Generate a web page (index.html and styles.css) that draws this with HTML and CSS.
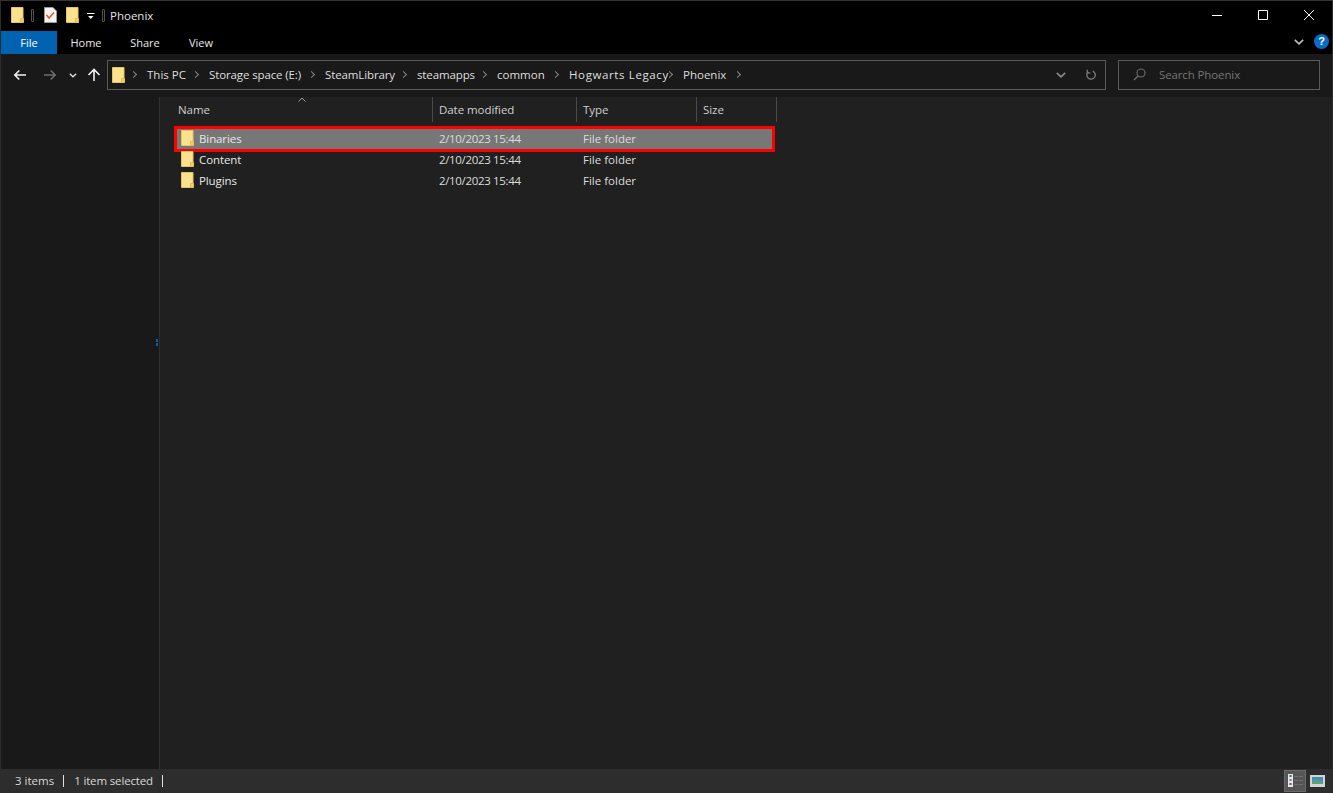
FILE: index.html
```html
<!DOCTYPE html>
<html lang="en">
<head>
<meta charset="utf-8">
<title>Phoenix</title>
<link rel="stylesheet" href="styles.css">
</head>
<body>
<svg class="defs" width="0" height="0" aria-hidden="true">
  <symbol id="folder" viewBox="0 0 13 16">
    <path d="M.5.5h11.500v15H.5z" fill="#fbe28f" stroke="#e9c35c"/>
    <path d="M9.500 15.500v-4h3v4z" fill="#f2cd6c" stroke="#e5bd55"/>
  </symbol>
</svg>
<div class="window">
  <header class="titlebar">
    <svg class="folder qa-first"><use href="#folder"/></svg>
    <span class="qa-sep"></span>
    <svg class="qa-check" viewBox="0 0 13 16"><path d="M.5.5h8.500l3.500 3.500v11.500h-12z" fill="#f4f4f4" stroke="#9a9a9a"/><path d="M2.500 8l2.500 3 5-5.500" fill="none" stroke="#e2562b" stroke-width="1.500"/></svg>
    <svg class="folder qa-second"><use href="#folder"/></svg>
    <svg class="qa-drop" viewBox="0 0 8 7"><path d="M0 .5h7.500" stroke="#fff"/><path d="M1 3h5.500l-2.750 3z" fill="#fff"/></svg>
    <span class="qa-sep qa-sep-last"></span>
    <span class="title-text">Phoenix</span>
    <div class="win-buttons">
      <svg class="win-btn" viewBox="0 0 46 31"><path d="M18 15.500h10" stroke="#fff"/></svg>
      <svg class="win-btn" viewBox="0 0 46 31"><path d="M18.500 10.500h9v9h-9z" fill="none" stroke="#fff"/></svg>
      <svg class="win-btn" viewBox="0 0 46 31"><path d="M18 10l10 10m0-10l-10 10" stroke="#fff" fill="none"/></svg>
    </div>
  </header>
  <nav class="ribbon">
    <span class="tab tab-file">File</span>
    <span class="tab tab-home">Home</span>
    <span class="tab tab-share">Share</span>
    <span class="tab tab-view">View</span>
    <svg class="ribbon-chev" viewBox="0 0 10 6"><path d="M.8.8L5 4.800 9.200.8" fill="none" stroke="#bdbdbd" stroke-width="1.600"/></svg>
    <span class="help">?</span>
  </nav>
  <div class="navrow">
    <svg class="nav-ico nav-back" viewBox="0 0 14 14"><path d="M13 7H1.800M6.300 2.500L1.800 7l4.500 4.500" fill="none" stroke="#f2f2f2" stroke-width="1.600"/></svg>
    <svg class="nav-ico nav-fwd" viewBox="0 0 14 14"><path d="M1 7h11.200M7.700 2.500L12.200 7l-4.500 4.500" fill="none" stroke="#6d6d6d" stroke-width="1.600"/></svg>
    <svg class="nav-down" viewBox="0 0 8 5"><path d="M.8.8L4 3.800 7.200.8" fill="none" stroke="#dcdcdc" stroke-width="1.400"/></svg>
    <svg class="nav-ico nav-up" viewBox="0 0 14 14"><path d="M7 13V1.800M1.500 7L7 1.500 12.500 7" fill="none" stroke="#f2f2f2" stroke-width="1.600"/></svg>
    <div class="address">
      <svg class="folder addr-folder"><use href="#folder"/></svg>
      <div class="crumbs">
        <span class="crumb">This PC</span>
        <span class="crumb crumb-tight">Storage space (E:)</span>
        <span class="crumb crumb-tight">SteamLibrary</span>
        <span class="crumb crumb-tight">steamapps</span>
        <span class="crumb">common</span>
        <span class="crumb crumb-wide">Hogwarts Legacy</span>
        <span class="crumb">Phoenix</span>
      </div>
      <span class="addr-actions">
        <svg class="addr-chev" viewBox="0 0 10 6"><path d="M.8.8L5 4.800 9.200.8" fill="none" stroke="#8a8a8a" stroke-width="1.600"/></svg>
        <svg class="addr-refresh" viewBox="0 0 12 12"><path d="M3.500 2.600A4.600 4.600 0 1 0 8.500 1.800" fill="none" stroke="#7c7c7c" stroke-width="1.400"/><path d="M2.500 .3v3.300h3.300" fill="none" stroke="#7c7c7c" stroke-width="1.400"/></svg>
      </span>
    </div>
    <div class="search">
      <svg class="search-ico" viewBox="0 0 13 13"><circle cx="8" cy="5" r="4" fill="none" stroke="#6e6e6e" stroke-width="1.100"/><path d="M5 8l-4 4" stroke="#6e6e6e" stroke-width="1.200"/></svg>
      <span>Search Phoenix</span>
    </div>
  </div>
  <main class="body">
    <aside class="sidebar"></aside>
    <section class="content">
      <div class="sort-mark"><svg viewBox="0 0 8 5" width="8" height="5"><path d="M.5 4.500L4 1l3.500 3.500" fill="none" stroke="#9d9d9d"/></svg></div>
      <div class="grid head">
        <span class="col col-name">Name</span>
        <span class="col">Date modified</span>
        <span class="col">Type</span>
        <span class="col">Size</span>
      </div>
      <div class="rows">
        <div class="grid row selected">
          <span class="col-name cell"><svg class="folder"><use href="#folder"/></svg>Binaries</span>
          <span class="cell cell-date">2/10/2023 15:44</span>
          <span class="cell">File folder</span>
          <span></span>
        </div>
        <div class="grid row">
          <span class="col-name cell"><svg class="folder"><use href="#folder"/></svg>Content</span>
          <span class="cell cell-date">2/10/2023 15:44</span>
          <span class="cell">File folder</span>
          <span></span>
        </div>
        <div class="grid row">
          <span class="col-name cell"><svg class="folder"><use href="#folder"/></svg>Plugins</span>
          <span class="cell cell-date">2/10/2023 15:44</span>
          <span class="cell">File folder</span>
          <span></span>
        </div>
      </div>
    </section>
  </main>
  <footer class="status">
    <span class="stat stat-items">3 items</span>
    <span class="stat stat-sel">1 item selected</span>
    <span class="view-btn view-on">
      <svg viewBox="0 0 20 20" width="20" height="20">
        <rect x="3" y="3" width="5" height="13" fill="#e8e8e8"/>
        <rect x="4.500" y="4" width="2" height="2" fill="#555"/><rect x="4.500" y="8" width="2" height="2" fill="#4a86c0"/><rect x="4.500" y="12" width="2" height="2" fill="#a33"/>
        <path d="M9 5.500h4m1 0h4M9 9.500h4m1 0h4M9 13.500h4m1 0h4" stroke="#707070"/>
      </svg>
    </span>
    <span class="view-btn">
      <svg viewBox="0 0 15 12" width="15" height="12">
        <rect width="15" height="12" fill="#d4d4d4"/>
        <rect x="2" y="2" width="11" height="7" fill="#3f8fc4"/>
        <path d="M2 6l4-2 7 3v2H2z" fill="#5f9e7a"/>
      </svg>
    </span>
  </footer>
</div>
</body>
</html>
```

FILE: styles.css
```css
* { box-sizing: border-box; }
html, body { margin: 0; height: 100%; background: #000; overflow: hidden; }
body { font-family: "Open Sans", "Noto Sans", sans-serif; font-size: 12px; color: #e6e6e6; }
.defs { position: absolute; }
.window { height: 793px; display: flex; flex-direction: column; border-left: 1px solid #2c2c2c; border-right: 1px solid #2c2c2c; }
.folder { width: 13px; height: 16px; flex: none; }

.titlebar { height: 31px; flex: none; background: #000; display: flex; align-items: center; border-top: 1px solid #333; padding: 0 0 2px 10px; }
.qa-sep { width: 3px; height: 13px; border: 1px solid #555; border-radius: 1px; margin-left: 7px; }
.qa-check { width: 13px; height: 16px; margin-left: 10px; }
.qa-second { margin-left: 9px; }
.qa-drop { width: 8px; height: 7px; margin: 3px 0 0 8px; }
.qa-sep-last { margin-left: 7px; }
.title-text { margin-left: 5px; color: #e4e4e4; font-size: 11.500px; }
.win-buttons { margin-left: auto; display: flex; }
.win-btn { width: 46px; height: 31px; }

.ribbon { height: 23px; flex: none; background: #000; display: flex; align-items: stretch; padding-right: 3px; }
.tab { display: flex; align-items: center; justify-content: center; font-size: 11px; color: #e8e8e8; }
.tab-file { width: 56px; background: #0063b1; color: #fff; }
.tab-home { width: 58px; }
.tab-share { width: 60px; }
.tab-view { width: 52px; }
.ribbon-chev { width: 10px; height: 6px; margin: 8px 0 0 auto; }
.help { width: 15px; height: 15px; margin: 3px 0 0 10px; border-radius: 50%; background: #0a6cc7; color: #fff; font: bold 11px/15px "Liberation Sans", sans-serif; text-align: center; }

.navrow { height: 43px; flex: none; background: #191919; display: flex; align-items: center; padding: 0 12px 1px 12px; }
.nav-ico { width: 14px; height: 14px; flex: none; }
.nav-fwd { margin-left: 16px; }
.nav-down { width: 8px; height: 5px; margin-left: 12px; }
.nav-up { margin-left: 10px; }
.address { width: 999px; height: 30px; margin-left: 6px; border: 1px solid #5b5b5b; display: flex; align-items: center; padding: 0 0 1px 4px; color: #dedede; }
.crumbs { display: grid; grid-template-columns: 62px 116px 92px 80px 72px 114px 70px; margin-left: 6px; font-size: 11.500px; }
.crumb { white-space: nowrap; display: flex; align-items: center; gap: 9px; }
.crumb-tight { letter-spacing: -.12px; }
.crumb-wide { letter-spacing: .62px; }
.crumb::before { content: ""; width: 4px; height: 4px; border-top: 1.500px solid #868686; border-right: 1.500px solid #868686; transform: rotate(45deg); margin-right: 2px; flex: none; }
.crumb:last-child::after { content: ""; width: 4px; height: 4px; border-top: 1.500px solid #868686; border-right: 1.500px solid #868686; transform: rotate(45deg); margin-left: 0; flex: none; }
.addr-actions { margin-left: auto; display: flex; align-items: center; height: 100%; }
.addr-chev { width: 10px; height: 6px; margin-right: 19px; }
.addr-refresh { width: 11px; height: 12px; margin-right: 9px; }
.search { width: 202px; height: 30px; margin-left: 12px; border: 1px solid #5b5b5b; display: flex; align-items: center; padding: 0 0 1px 14px; gap: 13px; color: #767676; font-size: 11.500px; letter-spacing: -.12px; }
.search-ico { width: 13px; height: 13px; }

.body { flex: 1; display: flex; min-height: 0; }
.sidebar { width: 159px; flex: none; background: #191919; border-right: 1px solid #2f2f2f; position: relative; }
.sidebar::after { content: ""; position: absolute; left: 155px; top: 242px; width: 2px; height: 7px; background: linear-gradient(#0a5fb0 0 3px, #191919 3px 4px, #0a5fb0 4px); }
.content { flex: 1; background: #202020; position: relative; }
.sort-mark { position: absolute; left: 138px; top: 0; line-height: 0; }
.grid { display: grid; grid-template-columns: 273px 144px 120px 80px; }
.head { height: 25px; color: #cfcfcf; font-size: 11.500px; letter-spacing: -.06px; }
.col { border-right: 1px solid #4a4a4a; padding-left: 6px; display: flex; align-items: center; }
.col-name { padding-left: 18px; }
.rows { margin-top: 7px; padding-left: 15px; display: flex; flex-direction: column; }
.row { height: 21px; grid-template-columns: 258px 144px 120px 78px; width: 600px; color: #dcdcdc; font-size: 11.500px; align-items: center; position: relative; }
.row .cell { padding: 0 0 2px 6px; display: flex; align-items: center; white-space: nowrap; }
.row .col-name { padding-left: 6px; gap: 5px; color: #e8e8e8; letter-spacing: -.1px; }
.row .cell-date { letter-spacing: -.34px; }
.row .folder { margin-bottom: 1px; }
.selected { background: #777; }
.selected::after { content: ""; position: absolute; inset: -3px 0 -2px -1px; border: 3px solid #f00; }

.status { height: 24px; flex: none; background: #2d2d2d; display: flex; align-items: center; padding: 0 4px 0 14px; color: #d8d8d8; font-size: 11.500px; }
.stat { padding-right: 9px; border-right: 1px solid #e0e0e0; line-height: 12px; height: 12px; display: flex; align-items: center; }
.stat-sel { margin-left: 10px; letter-spacing: -.15px; }
.view-btn { width: 22px; height: 22px; display: flex; align-items: center; justify-content: center; }
.view-on { margin-left: auto; background: #555; border: 1px solid #6b6b6b; }
```
